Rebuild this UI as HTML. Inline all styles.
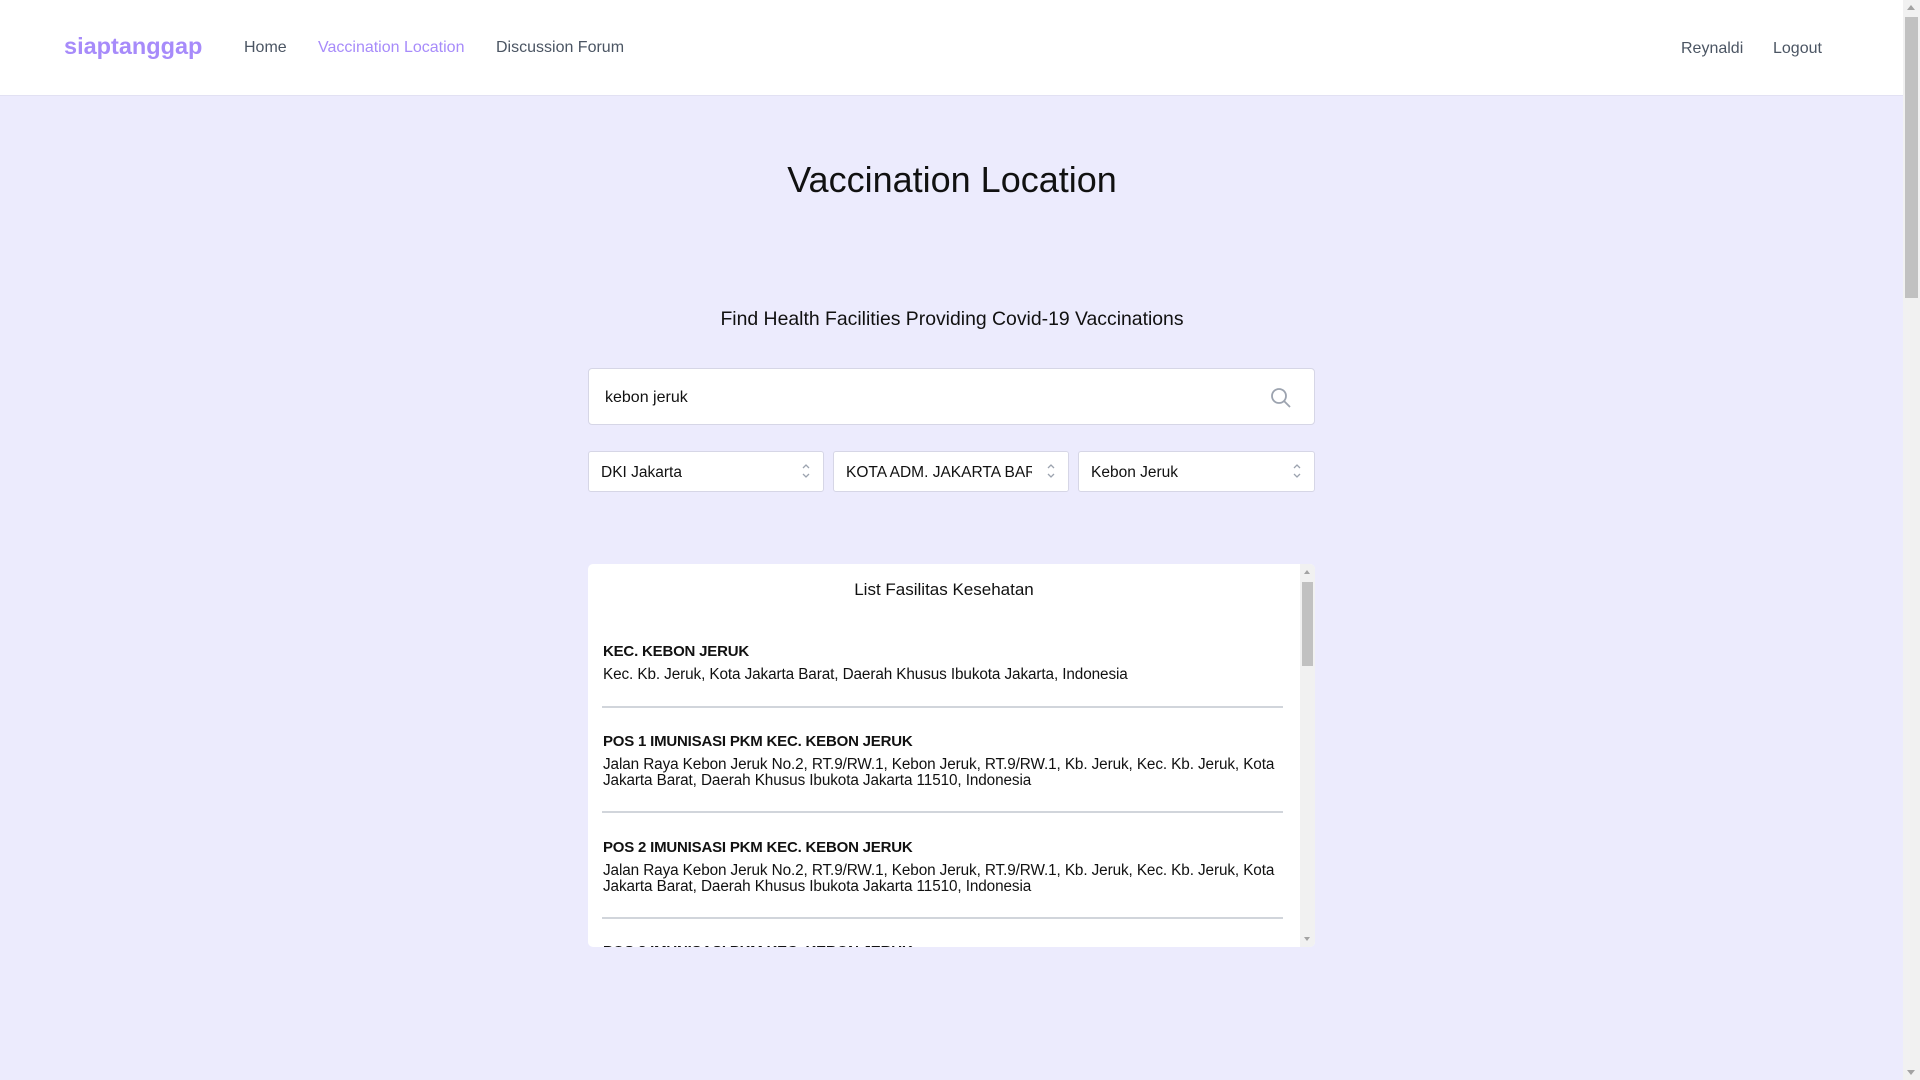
<!DOCTYPE html>
<html><head><meta charset="utf-8"><style>
*{box-sizing:border-box;margin:0;padding:0}
body{width:1920px;height:1080px;overflow:hidden;background:#ecebfd;font-family:"Liberation Sans",sans-serif;position:relative;color:#111}
.a{position:absolute;white-space:nowrap}
nav{position:absolute;left:0;top:0;width:1904px;height:96px;background:#fff;border-bottom:1px solid #e2e1f3}
.nl{font-size:16px;color:#4b5563;top:39px}
.sb{position:absolute;right:0;top:0;width:17px;height:1080px;background:#f1f1f1}
.sel{position:absolute;top:451px;height:41px;background:#fff;border:1px solid #d6d6e6;border-radius:3px;font-size:15.5px;padding:12px 12px;color:#111}
.arr{position:absolute;right:12px;top:10px}
.card{position:absolute;left:588px;top:564px;width:727px;height:383px;background:#fff;border-radius:5px;overflow:hidden}
.t{position:absolute;left:15px;font-size:15px;font-weight:bold;color:#111;letter-spacing:-0.2px}
.d{position:absolute;left:15px;font-size:15.3px;line-height:16px;color:#111;letter-spacing:-0.1px;white-space:nowrap}
.hr{position:absolute;left:14px;width:681px;height:2px;background:#d1d5db}
</style></head><body>
<nav>
<div class="a" style="left:64px;top:33px;font-size:23.5px;font-weight:bold;color:#a78bfa">siaptanggap</div>
<div class="a nl" style="left:244px">Home</div>
<div class="a nl" style="left:318px;color:#a78bfa">Vaccination Location</div>
<div class="a nl" style="left:496px">Discussion Forum</div>
<div class="a nl" style="left:1681px;top:40px">Reynaldi</div>
<div class="a nl" style="left:1773px;top:40px">Logout</div>
</nav>
<div class="sb"><div style="position:absolute;left:2px;top:17px;width:13px;height:281px;background:#c1c1c1"></div>
<div style="position:absolute;left:4px;top:5px;border:4px solid transparent;border-bottom:5px solid #a3a3a3;border-top:0"></div>
<div style="position:absolute;left:4px;bottom:5px;border:4px solid transparent;border-top:5px solid #a3a3a3;border-bottom:0"></div></div>

<div class="a" style="left:0;width:1904px;text-align:center;top:159px;font-size:36px;color:#111">Vaccination Location</div>
<div class="a" style="left:0;width:1904px;text-align:center;top:308px;font-size:19.4px;color:#111">Find Health Facilities Providing Covid-19 Vaccinations</div>

<div style="position:absolute;left:588px;top:368px;width:727px;height:57px;background:#fff;border:1px solid #d6d6e6;border-radius:4px">
<div class="a" style="left:16px;top:20px;font-size:16px">kebon jeruk</div>
<svg style="position:absolute;left:681px;top:18px" width="22" height="22" viewBox="0 0 22 22" fill="none" stroke="#9ca3af" stroke-width="1.8"><circle cx="9" cy="9" r="7"/><path d="M14 14l6 6"/></svg>
</div>

<div class="sel" style="left:588px;width:236px">DKI Jakarta<svg class="arr" width="10" height="18" viewBox="0 0 10 18" fill="none" stroke="#9ca3af" stroke-width="1.3"><path d="M2 6l3-3 3 3M2 12l3 3 3-3"/></svg></div>
<div class="sel" style="left:833px;width:236px;overflow:hidden">KOTA ADM. JAKARTA BAR<span style="position:absolute;left:198px;top:0;width:36px;height:39px;background:#fff"></span><svg class="arr" width="10" height="18" viewBox="0 0 10 18" fill="none" stroke="#9ca3af" stroke-width="1.3"><path d="M2 6l3-3 3 3M2 12l3 3 3-3"/></svg></div>
<div class="sel" style="left:1078px;width:237px">Kebon Jeruk<svg class="arr" width="10" height="18" viewBox="0 0 10 18" fill="none" stroke="#9ca3af" stroke-width="1.3"><path d="M2 6l3-3 3 3M2 12l3 3 3-3"/></svg></div>

<div class="card">
<div class="a" style="left:0;width:712px;text-align:center;top:16px;font-size:17px">List Fasilitas Kesehatan</div>
<div class="t" style="top:79px">KEC. KEBON JERUK</div>
<div class="d" style="top:103px">Kec. Kb. Jeruk, Kota Jakarta Barat, Daerah Khusus Ibukota Jakarta, Indonesia</div>
<div class="hr" style="top:142px"></div>
<div class="t" style="top:169px">POS 1 IMUNISASI PKM KEC. KEBON JERUK</div>
<div class="d" style="top:193px">Jalan Raya Kebon Jeruk No.2, RT.9/RW.1, Kebon Jeruk, RT.9/RW.1, Kb. Jeruk, Kec. Kb. Jeruk, Kota<br>Jakarta Barat, Daerah Khusus Ibukota Jakarta 11510, Indonesia</div>
<div class="hr" style="top:247px"></div>
<div class="t" style="top:275px">POS 2 IMUNISASI PKM KEC. KEBON JERUK</div>
<div class="d" style="top:299px">Jalan Raya Kebon Jeruk No.2, RT.9/RW.1, Kebon Jeruk, RT.9/RW.1, Kb. Jeruk, Kec. Kb. Jeruk, Kota<br>Jakarta Barat, Daerah Khusus Ibukota Jakarta 11510, Indonesia</div>
<div class="hr" style="top:353px"></div>
<div class="t" style="top:379px">POS 3 IMUNISASI PKM KEC. KEBON JERUK</div>
<div style="position:absolute;right:0;top:0;width:15px;height:383px;background:#f1f1f1">
<div style="position:absolute;left:2px;top:18px;width:11px;height:84px;background:#c1c1c1"></div>
<div style="position:absolute;left:4px;top:6px;border:3.5px solid transparent;border-bottom:4px solid #a3a3a3;border-top:0"></div>
<div style="position:absolute;left:4px;bottom:6px;border:3.5px solid transparent;border-top:4px solid #a3a3a3;border-bottom:0"></div>
</div>
</div>
</body></html>
